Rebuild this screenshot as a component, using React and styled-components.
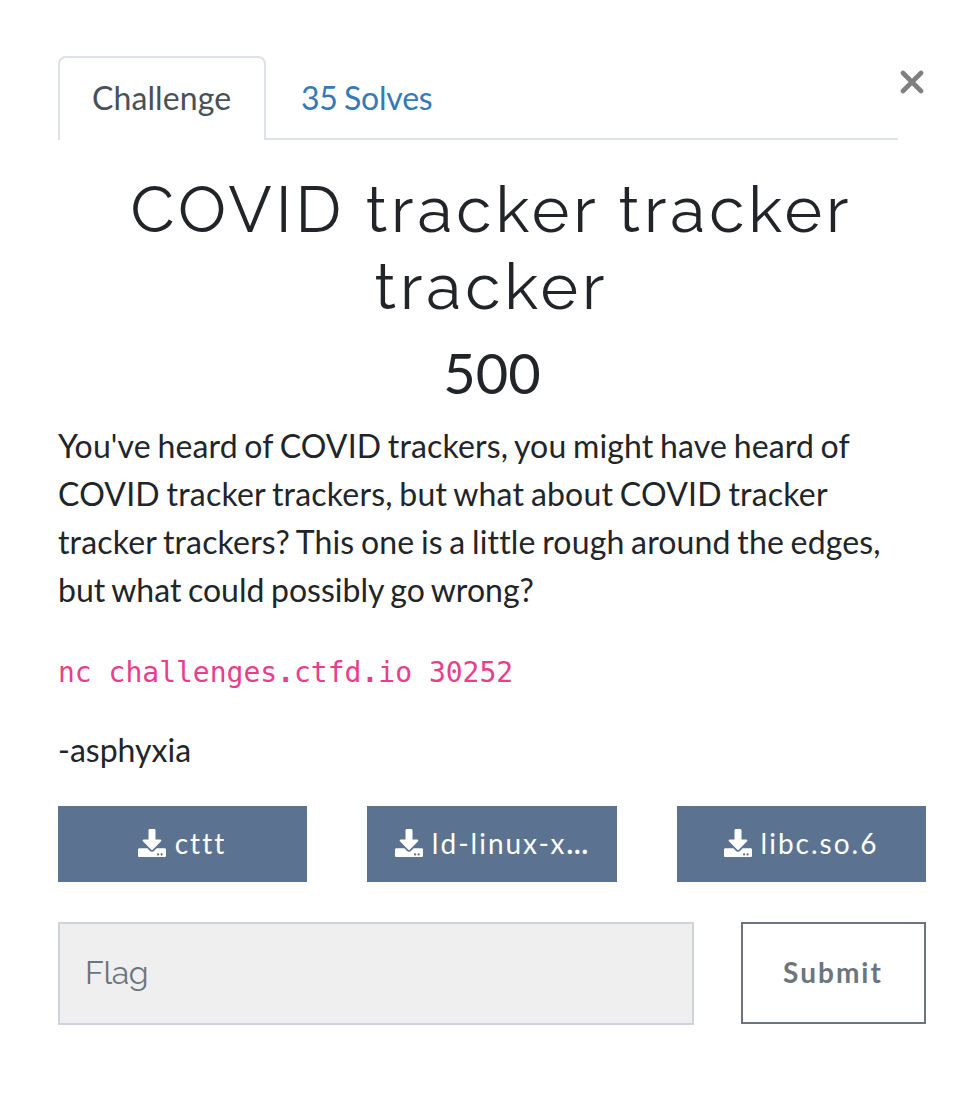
import React from "react";
import styled, { createGlobalStyle } from "styled-components";
import { FaDownload } from "react-icons/fa";

const Global = createGlobalStyle`
  * { box-sizing: border-box; }
  body { margin: 0; background: #fff; color: #212529; font: 32px/48px Lato, sans-serif; font-variant-ligatures: none; }
`;
const Modal = styled.main`
  width: 970px; height: 1118px; padding: 56px 44px 0 58px; overflow: hidden;
`;
const Header = styled.header`
  display: flex; align-items: flex-start; height: 84px;
`;
const Tabs = styled.nav`
  display: flex; width: 840px; height: 84px; border-bottom: 2px solid #dee2e6;
`;
const Tab = styled.a`
  height: 84px; padding: 16px 33px; border: 2px solid transparent; border-bottom: 0;
  border-radius: 8px 8px 0 0; white-space: nowrap; word-spacing: -1.8px; letter-spacing: -0.2px;
  color: ${(p) => (p.$active ? "#495057" : "#337ab7")};
  ${(p) => p.$active && "width: 208px; padding-left: 32px; background: #fff; border-color: #dee2e6; letter-spacing: 0.1px;"}
`;
const Close = styled.svg`
  width: 24px; height: 24px; margin: 14px 0 0 2px; flex: none;
`;
const Title = styled.h2`
  margin: 32px 0 0; width: 867px; text-align: center;
  font: 400 64px/76.8px Raleway, Lato, sans-serif; letter-spacing: 4px;
`;
const Points = styled.h3`
  margin: 13px 0 0; width: 868px; text-align: center; font-size: 56px; line-height: 67px; font-weight: 400;
`;
const Text = styled.p`
  margin: ${(p) => p.$top}px 0 0; width: 868px; white-space: nowrap;
`;
const Line = styled.span`
  display: block; word-spacing: -1.7px; letter-spacing: ${(p) => p.$track}px;
`;
const Code = styled.code`
  display: block; margin-top: 35px; color: #e83e8c; font: 28px/48px "DejaVu Sans Mono", monospace;
`;
const Files = styled.div`
  display: grid; grid-template-columns: 249px 250px 249px; gap: 60px; margin-top: 32px;
`;
const FileButton = styled.a`
  display: flex; align-items: center; justify-content: center; gap: 9px; height: 76px; padding: 0 1px 2px 0;
  background: #5b7290; color: #fff; font-size: 28px; line-height: 42px; letter-spacing: 2px; white-space: nowrap;
`;
const Dots = styled.b`
  margin-left: -9px; letter-spacing: 0;
`;
const Form = styled.form`
  display: flex; gap: 47px; margin-top: 40px;
`;
const Flag = styled.input`
  width: 636px; height: 103px; padding: 0 25px 1px; border: 2px solid #ced4da; border-radius: 0;
  background: #efefef; font: 32px Raleway, Lato, sans-serif; letter-spacing: -0.4px;
  &::placeholder { color: #6c757d; opacity: 1; }
`;
const Submit = styled.button`
  width: 185px; height: 102px; border: 2px solid #6c757d; background: #fff; color: #6c757d;
  font: 700 28px Lato, sans-serif; letter-spacing: 2px; padding: 0 1px 2px 0;
`;

export default function App() {
  return (
    <Modal>
      <Global />
      <Header>
        <Tabs>
          <Tab $active>Challenge</Tab>
          <Tab>35 Solves</Tab>
        </Tabs>
        <Close viewBox="0 0 24 24"><path d="M3 3L21 21M21 3L3 21" stroke="#7f7f7f" strokeWidth="4.6" strokeLinecap="round" /></Close>
      </Header>
      <Title>COVID tracker tracker<br />tracker</Title>
      <Points>500</Points>
      <Text $top={16}>
        <Line $track={0.14}>You've heard of COVID trackers, you might have heard of</Line>
        <Line $track={0.2}>COVID tracker trackers, but what about COVID tracker</Line>
        <Line $track={0.15}>tracker trackers? This one is a little rough around the edges,</Line>
        <Line $track={0.02}>but what could possibly go wrong?</Line>
      </Text>
      <Code>nc challenges<b>.</b>ctfd<b>.</b>io 30252</Code>
      <Text $top={29}>-asphyxia</Text>
      <Files>
        <FileButton><FaDownload size={28} />cttt</FileButton>
        <FileButton><FaDownload size={28} />ld-linux-x<Dots>…</Dots></FileButton>
        <FileButton><FaDownload size={28} />libc.so.6</FileButton>
      </Files>
      <Form>
        <Flag placeholder="Flag" />
        <Submit type="button">Submit</Submit>
      </Form>
    </Modal>
  );
}
